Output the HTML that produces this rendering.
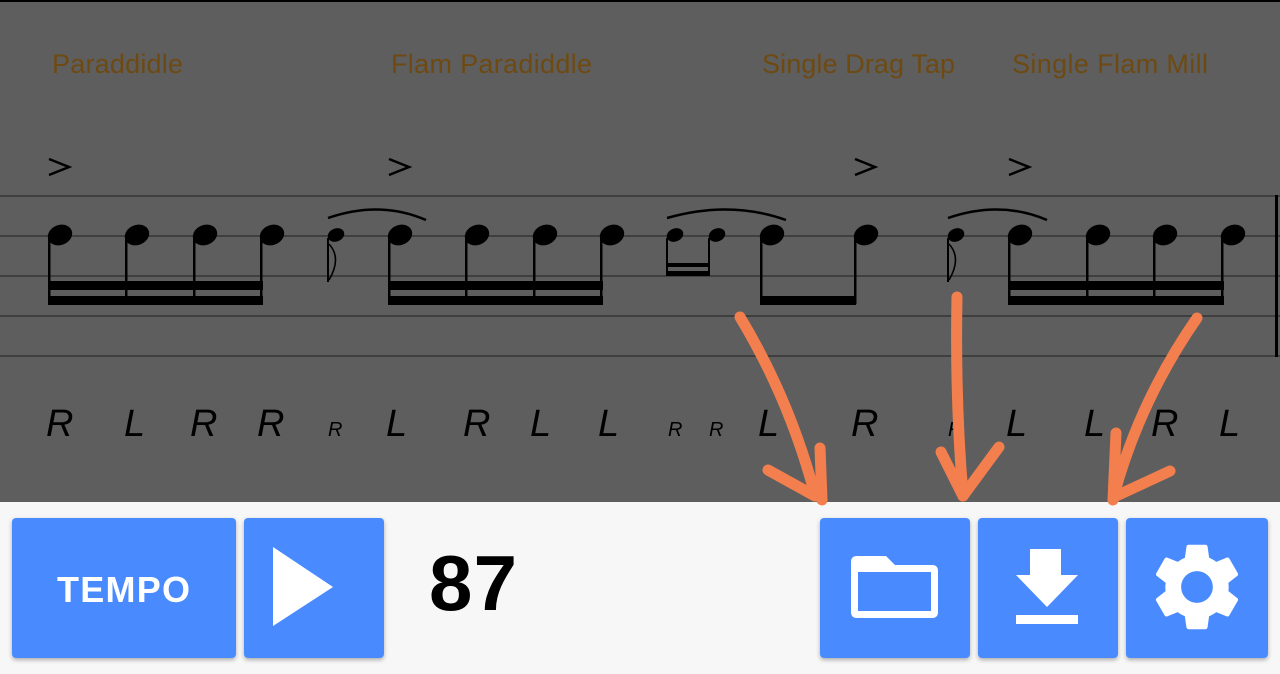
<!DOCTYPE html>
<html><head><meta charset="utf-8"><style>
body{margin:0;width:1280px;height:674px;overflow:hidden;background:#f7f7f7;font-family:"Liberation Sans",sans-serif;}
svg{display:block}
</style></head><body>
<svg width="1280" height="674" viewBox="0 0 1280 674" xmlns="http://www.w3.org/2000/svg">
<rect x="0" y="0" width="1280" height="502" fill="#5e5e5e"/>
<rect x="0" y="0" width="1280" height="2" fill="#000"/>
<g font-family="Liberation Sans, sans-serif" font-size="27" fill="#6e4a12">
<text x="52" y="73" textLength="131">Paraddidle</text>
<text x="391" y="73" textLength="201">Flam Paradiddle</text>
<text x="762" y="73" textLength="193">Single Drag Tap</text>
<text x="1012" y="73" textLength="196">Single Flam Mill</text>
</g>
<g stroke="#3f3f3f" stroke-width="2">
<line x1="0" y1="196" x2="1280" y2="196"/><line x1="0" y1="236" x2="1280" y2="236"/>
<line x1="0" y1="276" x2="1280" y2="276"/><line x1="0" y1="316" x2="1280" y2="316"/>
<line x1="0" y1="356" x2="1280" y2="356"/>
</g>
<rect x="1275" y="195" width="3" height="162" fill="#000"/>
<g fill="none" stroke="#000" stroke-width="2.5">
<path d="M49 159 L69 167 L49 175"/><path d="M389 159 L409 167 L389 175"/>
<path d="M855 159 L875 167 L855 175"/><path d="M1009 159 L1029 167 L1009 175"/>
</g>
<g fill="#000">
<ellipse cx="60" cy="235" rx="12.5" ry="10" transform="rotate(-22 60 235)"/>
<ellipse cx="137" cy="235" rx="12.5" ry="10" transform="rotate(-22 137 235)"/>
<ellipse cx="205" cy="235" rx="12.5" ry="10" transform="rotate(-22 205 235)"/>
<ellipse cx="272" cy="235" rx="12.5" ry="10" transform="rotate(-22 272 235)"/>
<ellipse cx="400" cy="235" rx="12.5" ry="10" transform="rotate(-22 400 235)"/>
<ellipse cx="477" cy="235" rx="12.5" ry="10" transform="rotate(-22 477 235)"/>
<ellipse cx="545" cy="235" rx="12.5" ry="10" transform="rotate(-22 545 235)"/>
<ellipse cx="612" cy="235" rx="12.5" ry="10" transform="rotate(-22 612 235)"/>
<ellipse cx="772" cy="235" rx="12.5" ry="10" transform="rotate(-22 772 235)"/>
<ellipse cx="866" cy="235" rx="12.5" ry="10" transform="rotate(-22 866 235)"/>
<ellipse cx="1020" cy="235" rx="12.5" ry="10" transform="rotate(-22 1020 235)"/>
<ellipse cx="1098" cy="235" rx="12.5" ry="10" transform="rotate(-22 1098 235)"/>
<ellipse cx="1165" cy="235" rx="12.5" ry="10" transform="rotate(-22 1165 235)"/>
<ellipse cx="1233" cy="235" rx="12.5" ry="10" transform="rotate(-22 1233 235)"/>
<ellipse cx="336" cy="235" rx="8.5" ry="6.5" transform="rotate(-22 336 235)"/>
<ellipse cx="675" cy="235" rx="8.5" ry="6.5" transform="rotate(-22 675 235)"/>
<ellipse cx="717" cy="235" rx="8.5" ry="6.5" transform="rotate(-22 717 235)"/>
<ellipse cx="956" cy="235" rx="8.5" ry="6.5" transform="rotate(-22 956 235)"/>
<rect x="48" y="238" width="2.5" height="66"/><rect x="125" y="238" width="2.5" height="66"/>
<rect x="193" y="238" width="2.5" height="66"/><rect x="260" y="238" width="2.5" height="66"/>
<rect x="388" y="238" width="2.5" height="66"/><rect x="465" y="238" width="2.5" height="66"/>
<rect x="533" y="238" width="2.5" height="66"/><rect x="600" y="238" width="2.5" height="66"/>
<rect x="760" y="238" width="2.5" height="66"/><rect x="854" y="238" width="2.5" height="66"/>
<rect x="1008" y="238" width="2.5" height="66"/><rect x="1086" y="238" width="2.5" height="66"/>
<rect x="1153" y="238" width="2.5" height="66"/><rect x="1221" y="238" width="2.5" height="66"/>
<rect x="327" y="238" width="2" height="44"/><rect x="666" y="238" width="2" height="38"/>
<rect x="708" y="238" width="2" height="38"/><rect x="947" y="238" width="2" height="44"/>
<rect x="48" y="281" width="215" height="9"/><rect x="48" y="296" width="215" height="9"/>
<rect x="388" y="281" width="215" height="9"/><rect x="388" y="296" width="215" height="9"/>
<rect x="1008" y="281" width="216" height="9"/><rect x="1008" y="296" width="216" height="9"/>
<rect x="760" y="296" width="96" height="9"/>
<rect x="666" y="263" width="44" height="4"/><rect x="666" y="271" width="44" height="5"/>
</g>
<g fill="none" stroke="#000">
<path d="M329 244 Q342 258 329 280" stroke-width="1.6"/>
<path d="M949 244 Q962 258 949 280" stroke-width="1.6"/>
<path d="M328 218 Q380 200 426 220" stroke-width="2.5"/>
<path d="M667 218 Q730 200 786 220" stroke-width="2.5"/>
<path d="M948 218 Q1000 200 1047 220" stroke-width="2.5"/>
</g>
<g font-family="Liberation Sans, sans-serif" font-style="italic" fill="#000">
<g font-size="38">
<text x="46" y="436">R</text><text x="124" y="436">L</text><text x="190" y="436">R</text><text x="257" y="436">R</text>
<text x="386" y="436">L</text><text x="463" y="436">R</text><text x="530" y="436">L</text><text x="598" y="436">L</text>
<text x="758" y="436">L</text><text x="851" y="436">R</text>
<text x="1006" y="436">L</text><text x="1084" y="436">L</text><text x="1151" y="436">R</text><text x="1219" y="436">L</text>
</g>
<g font-size="20">
<text x="328" y="436">R</text><text x="668" y="436">R</text><text x="709" y="436">R</text><text x="948" y="436">R</text>
</g>
</g>
<g fill="none" stroke="#f47f4e" stroke-width="11" stroke-linecap="round" stroke-linejoin="round">
<path d="M740 317 Q790 400 815 495"/><path d="M768 470 L815 496"/><path d="M820 448 L822 500"/>
<path d="M957 297 Q955 400 963 495"/><path d="M941 452 L963 496"/><path d="M999 447 L963 496"/>
<path d="M1197 318 Q1140 400 1114 495"/><path d="M1170 471 L1114 497"/><path d="M1116 433 L1113 500"/>
</g>
<defs><filter id="sh" x="-10%" y="-10%" width="120%" height="130%"><feDropShadow dx="0" dy="2" stdDeviation="2" flood-color="#000" flood-opacity="0.3"/></filter></defs>
<g fill="#4a8bff" filter="url(#sh)">
<rect x="12" y="518" width="224" height="140" rx="4"/>
<rect x="244" y="518" width="140" height="140" rx="4"/>
<rect x="820" y="518" width="150" height="140" rx="4"/>
<rect x="978" y="518" width="140" height="140" rx="4"/>
<rect x="1126" y="518" width="142" height="140" rx="4"/>
</g>
<text x="57" y="602" textLength="133" font-family="Liberation Sans, sans-serif" font-weight="bold" font-size="36" fill="#fff">TEMPO</text>
<path d="M273 547 L333 587 L273 626 Z" fill="#fff"/>
<text x="429" y="610" textLength="88" font-family="Liberation Sans, sans-serif" font-weight="bold" font-size="78" fill="#000">87</text>
<path d="M857 556 H886 L895 565 H932 Q938 565 938 571 V612 Q938 618 932 618 H857 Q851 618 851 612 V562 Q851 556 857 556 Z M858 572 V611 H931 V572 Z" fill="#fff" fill-rule="evenodd"/>
<path d="M1030 549 H1061 V575 H1078 L1047 607 L1016 575 H1030 Z" fill="#fff"/>
<rect x="1016" y="615" width="62" height="9" fill="#fff"/>
<path transform="translate(1144.2 534.2) scale(4.4)" fill="#fff" d="M19.14 12.94c.04-.3.06-.61.06-.94 0-.32-.02-.64-.07-.94l2.030-1.58c.18-.14.23-.41.12-.61l-1.92-3.32c-.12-.22-.37-.29-.59-.22l-2.390.96c-.5-.38-1.03-.7-1.62-.94l-.36-2.54c-.04-.24-.24-.41-.48-.41h-3.84c-.24 0-.43.17-.47.41l-.36 2.54c-.59.24-1.13.57-1.62.94l-2.39-.96c-.22-.08-.47 0-.59.22L2.74 8.87c-.12.21-.08.47.12.61l2.03 1.58c-.05.3-.09.63-.09.94s.02.64.07.94l-2.03 1.58c-.18.14-.23.41-.12.61l1.92 3.32c.12.22.37.29.59.22l2.39-.96c.5.38 1.03.7 1.62.94l.36 2.54c.05.24.24.41.48.41h3.84c.24 0 .44-.17.47-.41l.36-2.54c.59-.24 1.13-.56 1.62-.94l2.39.96c.22.08.47 0 .59-.22l1.92-3.32c.12-.22.07-.47-.12-.61l-2.01-1.58zM12 15.6c-1.98 0-3.6-1.62-3.6-3.6s1.62-3.6 3.6-3.6 3.6 1.62 3.6 3.6-1.62 3.6-3.6 3.6z"/>
</svg>
</body></html>
